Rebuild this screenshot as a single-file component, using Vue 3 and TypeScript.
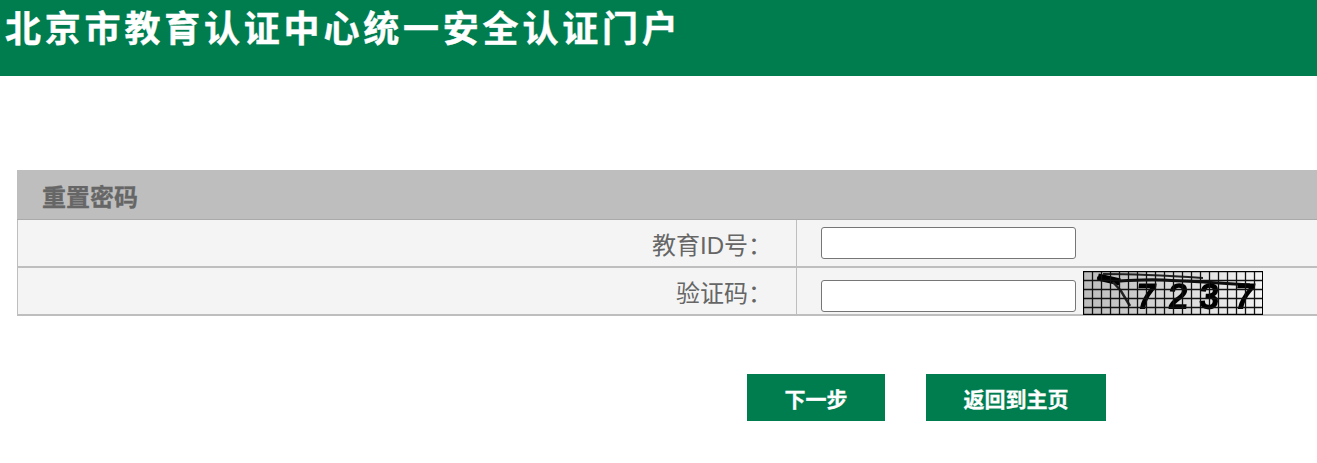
<script setup lang="ts">
const vLines: number[] = Array.from({ length: 21 }, (_, i) => i * 9 + 0.5);
const hLines: number[] = [0.5, 9.5, 18.5, 27.5, 36.5, 43.5];
</script>

<template>
  <div class="page">
    <header class="banner">
      <h1 class="title">北京市教育认证中心统一安全认证门户</h1>
    </header>
    <main class="content">
      <section class="panel">
        <h2 class="panel-head">重置密码</h2>
        <div class="row">
          <label class="label">教育ID号：</label>
          <div class="field"><input class="input" type="text" /></div>
        </div>
        <div class="row">
          <label class="label">验证码：</label>
          <div class="field">
            <input class="input low" type="text" />
            <svg class="captcha" width="180" height="44" viewBox="0 0 180 44">
              <defs>
                <linearGradient id="cap" x1="0" x2="1" y1="0" y2="0">
                  <stop offset="0" stop-color="#bcbcbc" />
                  <stop offset="0.5" stop-color="#d8d8d8" />
                  <stop offset="1" stop-color="#f4f4f4" />
                </linearGradient>
                <filter id="soft" x="-5%" y="-5%" width="110%" height="110%">
                  <feGaussianBlur stdDeviation="0.6" />
                </filter>
              </defs>
              <rect width="180" height="44" fill="url(#cap)" />
              <g filter="url(#soft)">
                <path d="M14 7 L 37 10 C 55 9 66 8 80 9 S 105 10 120 11 S 150 13 167 14" fill="none" stroke="#111" stroke-width="3" />
                <path d="M15 6 L 37 11" fill="none" stroke="#000" stroke-width="7" />
                <path d="M20 3 C 50 3 90 5 120 7" fill="none" stroke="#222" stroke-width="2" />
                <path d="M30 11 L 38 20 L 47 35" fill="none" stroke="#222" stroke-width="2.5" />
                <text transform="translate(52 37) skewX(-8)" class="digit">7</text>
                <text transform="translate(85 37) skewX(-4)" class="digit">2</text>
                <text transform="translate(116 37) skewX(-4)" class="digit">3</text>
                <text transform="translate(150 37) skewX(-10)" class="digit">7</text>
              </g>
              <g stroke="#111" stroke-width="1.3">
                <line v-for="x in vLines" :key="'v' + x" :x1="x" :x2="x" y1="0" y2="44" />
                <line v-for="y in hLines" :key="'h' + y" x1="0" x2="180" :y1="y" :y2="y" />
              </g>
              <rect x="0.5" y="0.5" width="179" height="43" fill="none" stroke="#000" />
            </svg>
          </div>
        </div>
      </section>
      <div class="actions">
        <button class="btn next" type="button">下一步</button>
        <button class="btn back" type="button">返回到主页</button>
      </div>
    </main>
  </div>
</template>

<style scoped>
.page {
  width: 1317px;
  height: 463px;
  overflow: hidden;
  background: #fff;
  font-family: "Liberation Sans", "Noto Sans CJK SC", sans-serif;
}
.banner {
  height: 76px;
  background: #007d4f;
  padding-left: 5px;
  box-sizing: border-box;
}
.title {
  margin: 0;
  padding-top: 10px;
  font-size: 36px;
  line-height: 40px;
  font-weight: 700;
  letter-spacing: 3.8px;
  color: #fff;
  white-space: nowrap;
  -webkit-text-stroke: 0.4px #fff;
}
.content {
  padding: 94px 0 0 17px;
}
.panel {
  border-left: 1px solid #bebebe;
}
.panel-head {
  margin: 0 0 0 -1px;
  height: 50px;
  box-sizing: border-box;
  padding: 14px 0 0 25px;
  background: #bebebe;
  border-bottom: 1px solid #aaa;
  color: #666;
  font-size: 24px;
  line-height: 28px;
  font-weight: 700;
  -webkit-text-stroke: 0.3px #666;
}
.row {
  display: flex;
  height: 48px;
  box-sizing: border-box;
  background: #f4f4f4;
  border-bottom: 2px solid #bebebe;
}
.label {
  width: 779px;
  box-sizing: border-box;
  padding: 10px 24px 0 0;
  text-align: right;
  border-right: 1px solid #bebebe;
  color: #666;
  font-size: 24px;
  line-height: 32px;
}
.field {
  display: flex;
  align-items: flex-start;
  gap: 7px;
  padding: 7px 0 0 24px;
}
.input {
  width: 255px;
  height: 32px;
  box-sizing: border-box;
  margin: 0;
  padding: 0;
  background: #fff;
  border: 1px solid #767676;
  border-radius: 3px;
}
.low {
  margin-top: 5px;
}
.captcha {
  display: block;
  margin-top: -4px;
  flex: none;
}
.digit {
  font-family: "Liberation Sans", sans-serif;
  font-size: 34px;
  fill: #000;
  stroke: #000;
  stroke-width: 2.2px;
}
.actions {
  display: flex;
  gap: 41px;
  padding: 58px 0 0 730px;
}
.btn {
  height: 47px;
  border: 0;
  padding: 0;
  background: #007d4f;
  color: #fff;
  font-family: inherit;
  font-size: 21px;
  font-weight: 700;
  -webkit-text-stroke: 0.3px #fff;
}
.next {
  width: 138px;
}
.back {
  width: 180px;
}
</style>
